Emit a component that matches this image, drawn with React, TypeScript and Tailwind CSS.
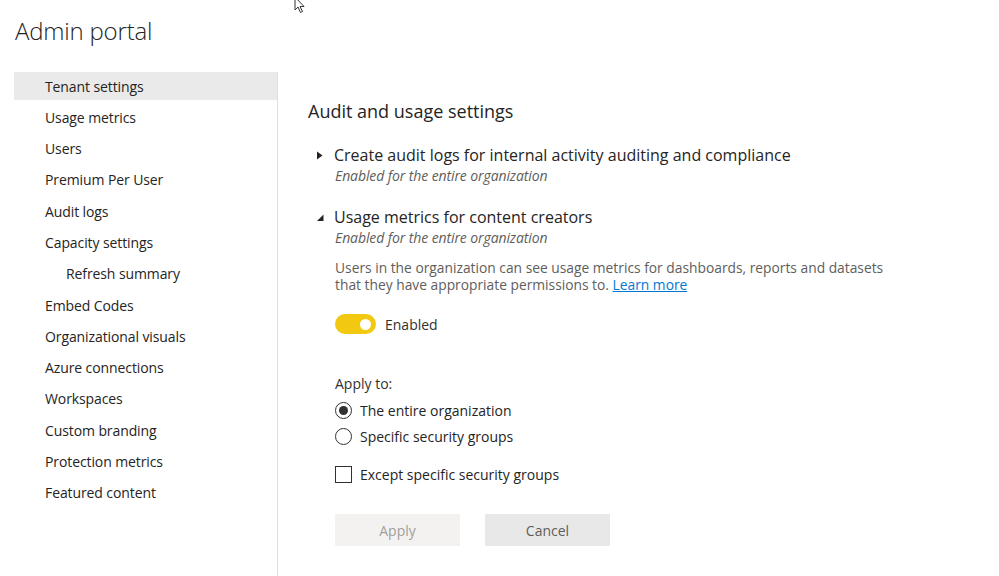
import React from 'react';

const navItems: { label: string; sub?: boolean; active?: boolean }[] = [
  { label: 'Tenant settings', active: true },
  { label: 'Usage metrics' },
  { label: 'Users' },
  { label: 'Premium Per User' },
  { label: 'Audit logs' },
  { label: 'Capacity settings' },
  { label: 'Refresh summary', sub: true },
  { label: 'Embed Codes' },
  { label: 'Organizational visuals' },
  { label: 'Azure connections' },
  { label: 'Workspaces' },
  { label: 'Custom branding' },
  { label: 'Protection metrics' },
  { label: 'Featured content' },
];

const font = { fontFamily: '"Open Sans", "Noto Sans", sans-serif' };

const Caret = ({ open }: { open: boolean }) => (
  <svg width="8" height="9" viewBox="0 0 8 9" className="shrink-0">
    {open ? <polygon points="7.5,1.5 7.5,8 1,8" fill="#252423" /> : <polygon points="1,0.5 6.5,4.5 1,8.5" fill="#252423" />}
  </svg>
);

const App: React.FC = () => {
  return (
    <div className="relative w-[999px] h-[576px] overflow-hidden bg-white text-[#252423]" style={font}>
      <div className="pl-[14px] pt-[14px]">
        <h1 className="pl-[1px] h-[58px] text-[24px] font-light leading-[34px] tracking-[-0.2px]">Admin portal</h1>
      </div>

      <div className="flex h-[504px]">
        <nav className="ml-[14px] w-[264px] border-r border-[#e1dfdd] h-full">
          {navItems.map((item) => (
            <div
              key={item.label}
              className={`h-[28px] mb-[3.3px] flex items-center text-[14px] tracking-[-0.1px] ${item.sub ? 'pl-[52px]' : 'pl-[31px]'} ${item.active ? 'bg-[#eaeaea]' : ''}`}
            >
              {item.label}
            </div>
          ))}
        </nav>

        <main className="pl-[30px] pt-[26px] flex-1">
          <h2 className="text-[18px] leading-[26px]">Audit and usage settings</h2>

          <div className="mt-[20px] pl-[8px]">
            <div className="flex items-center gap-[10px] h-[22px]">
              <Caret open={false} />
              <span className="text-[16px]">Create audit logs for internal activity auditing and compliance</span>
            </div>
            <div className="pl-[19px] text-[14px] italic text-[#605e5c] h-[20px] leading-[20px] tracking-[-0.1px]">Enabled for the entire organization</div>
          </div>

          <div className="mt-[20px] pl-[8px]">
            <div className="flex items-center gap-[10px] h-[22px]">
              <Caret open={true} />
              <span className="text-[16px]">Usage metrics for content creators</span>
            </div>
            <div className="pl-[19px] text-[14px] italic text-[#605e5c] h-[20px] leading-[20px] tracking-[-0.1px]">Enabled for the entire organization</div>

            <div className="pl-[19px]">
              <p className="mt-[10.5px] text-[13.8px] leading-[17px] text-[#605e5c] w-[556px]">
                Users in the organization can see usage metrics for dashboards, reports and datasets that they have appropriate permissions to.{' '}
                <a className="text-[#0078d4] underline">Learn more</a>
              </p>

              <div className="mt-[21.5px] flex items-center gap-[9px] h-[20px]">
                <div className="w-[41px] h-[20px] rounded-full bg-[#f2c811] flex items-center justify-end pr-[5px]">
                  <div className="w-[11px] h-[11px] rounded-full bg-white" />
                </div>
                <span className="text-[14px] text-[#323130]">Enabled</span>
              </div>

              <div className="mt-[40px] text-[14px] text-[#323130] h-[20px] leading-[20px]">Apply to:</div>

              <div className="mt-[6px] flex items-center gap-[8px] h-[20px]">
                <div className="w-[17px] h-[17px] rounded-full border border-[#323130] flex items-center justify-center">
                  <div className="w-[9px] h-[9px] rounded-full bg-[#323130]" />
                </div>
                <span className="text-[14px]">The entire organization</span>
              </div>
              <div className="mt-[6px] flex items-center gap-[8px] h-[20px]">
                <div className="w-[17px] h-[17px] rounded-full border border-[#323130]" />
                <span className="text-[14px]">Specific security groups</span>
              </div>

              <div className="mt-[18px] flex items-center gap-[8px] h-[20px]">
                <div className="w-[17px] h-[17px] border border-[#323130]" />
                <span className="text-[14px]">Except specific security groups</span>
              </div>

              <div className="mt-[30px] flex gap-[25px]">
                <button className="w-[125px] h-[32px] bg-[#f3f2f1] text-[#a19f9d] text-[14px]">Apply</button>
                <button className="w-[125px] h-[32px] bg-[#e8e8e8] text-[#605e5c] text-[14px]">Cancel</button>
              </div>
            </div>
          </div>
        </main>
      </div>

      <svg className="absolute left-[294px] top-[-4px]" width="12" height="18" viewBox="0 0 12 18">
        <path d="M1 1 L1 14 L4 11 L6.5 16.5 L8.5 15.5 L6 10.5 L10 10.5 Z" fill="white" stroke="#333" strokeWidth="1" strokeLinejoin="round" />
      </svg>
    </div>
  );
};

export default App;
